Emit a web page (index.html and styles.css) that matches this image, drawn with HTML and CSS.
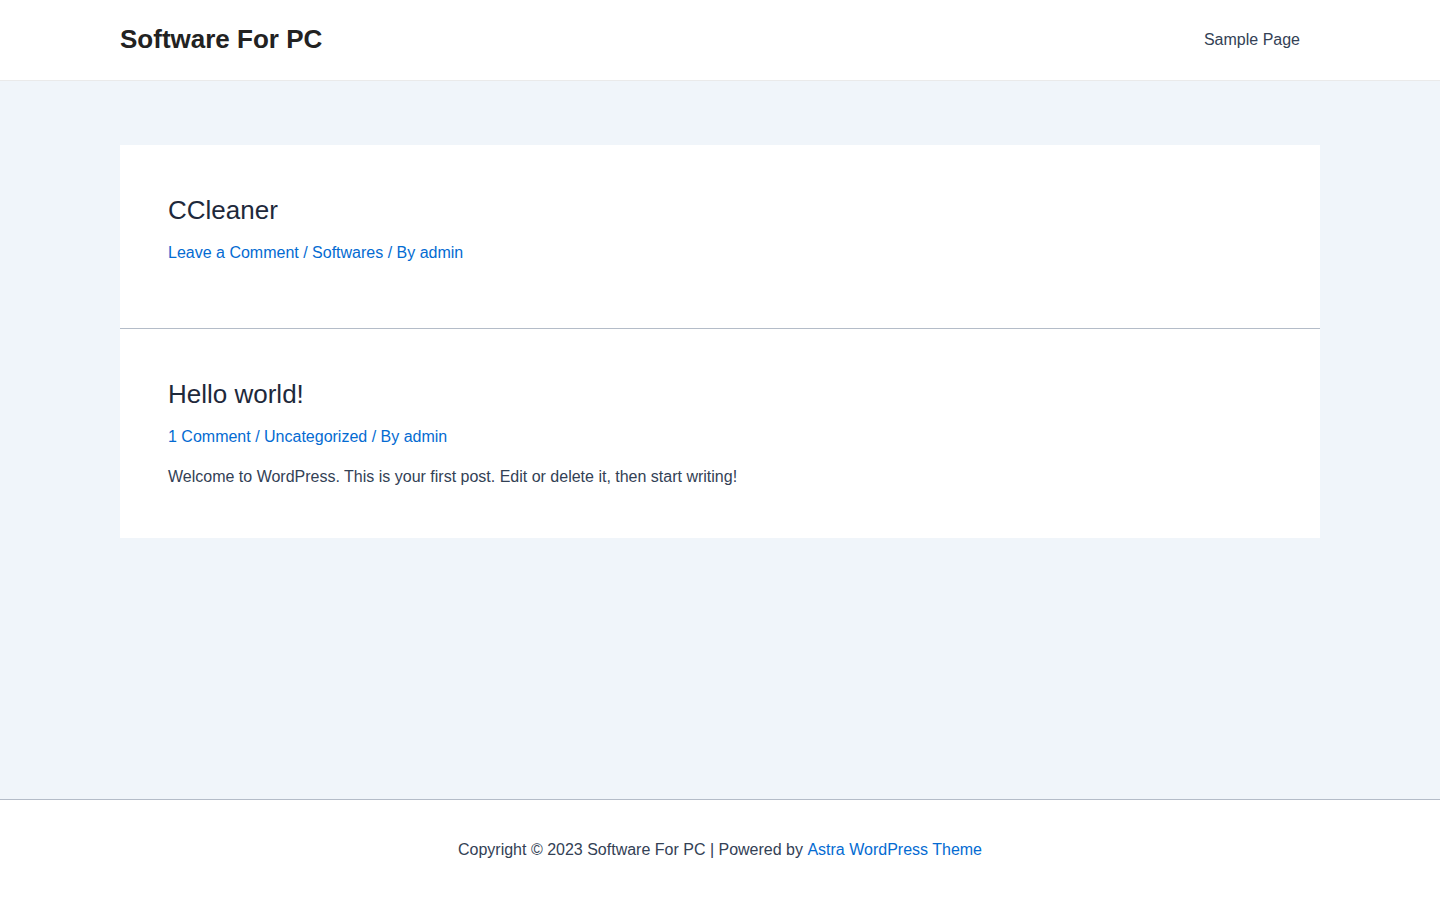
FILE: index.html
```html
<!DOCTYPE html>
<html lang="en">
<head>
<meta charset="utf-8">
<title>Software For PC</title>
<link rel="stylesheet" href="styles.css">
</head>
<body>
<header class="site-header">
  <div class="container header-inner">
    <a class="site-title" href="#">Software For PC</a>
    <nav class="main-nav">
      <a class="menu-link" href="#">Sample Page</a>
    </nav>
  </div>
</header>
<main class="site-content">
  <div class="container posts">
    <article class="post post-first">
      <h2 class="entry-title">CCleaner</h2>
      <div class="entry-meta"><a href="#">Leave a Comment</a> / <a href="#">Softwares</a> / By <a href="#">admin</a></div>
      <div class="entry-content"></div>
    </article>
    <article class="post">
      <h2 class="entry-title">Hello world!</h2>
      <div class="entry-meta"><a href="#">1 Comment</a> / <a href="#">Uncategorized</a> / By <a href="#">admin</a></div>
      <div class="entry-content"><p>Welcome to WordPress. This is your first post. Edit or delete it, then start writing!</p></div>
    </article>
  </div>
</main>
<footer class="site-footer">
  <div class="footer-inner">Copyright © 2023 Software For PC | Powered by <a href="#">Astra WordPress Theme</a></div>
</footer>
</body>
</html>
```
FILE: styles.css
```css
* { box-sizing: border-box; }
html, body { margin: 0; padding: 0; }
body {
  font-family: "Liberation Sans", Arial, sans-serif;
  font-size: 16px;
  line-height: 1.65;
  color: #334155;
  background: #f0f5fa;
  min-height: 100vh;
  display: flex;
  flex-direction: column;
}
a { color: #046bd2; text-decoration: none; }
.container { width: 1200px; margin: 0 auto; }
.site-header {
  background: #fff;
  border-bottom: 1px solid #eaeaea;
}
.header-inner {
  height: 80px;
  display: flex;
  align-items: center;
  justify-content: space-between;
}
.site-title {
  font-size: 26px;
  font-weight: 700;
  color: #222222;
  line-height: 1.2;
}
.menu-link {
  color: #334155;
  padding: 0 20px;
  line-height: 80px;
  display: block;
}
.site-content { flex: 1; padding: 64px 0; }
.post {
  background: #fff;
  padding: 48px 48px 47px;
}
.post-first { border-bottom: 1px solid #b4bcc8; }
.entry-title {
  margin: 2px 0 14px;
  font-size: 26px;
  font-weight: 400;
  line-height: 1.2;
  color: #1e293b;
}
.entry-meta { line-height: 1.65; color: #046bd2; }
.entry-content { margin-top: 14px; }
.entry-content p { margin: 0; }
.site-footer {
  background: #fff;
  border-top: 1px solid #b4bcc8;
}
.footer-inner {
  height: 100px;
  display: flex;
  align-items: center;
  justify-content: center;
  white-space: pre;
}
```
